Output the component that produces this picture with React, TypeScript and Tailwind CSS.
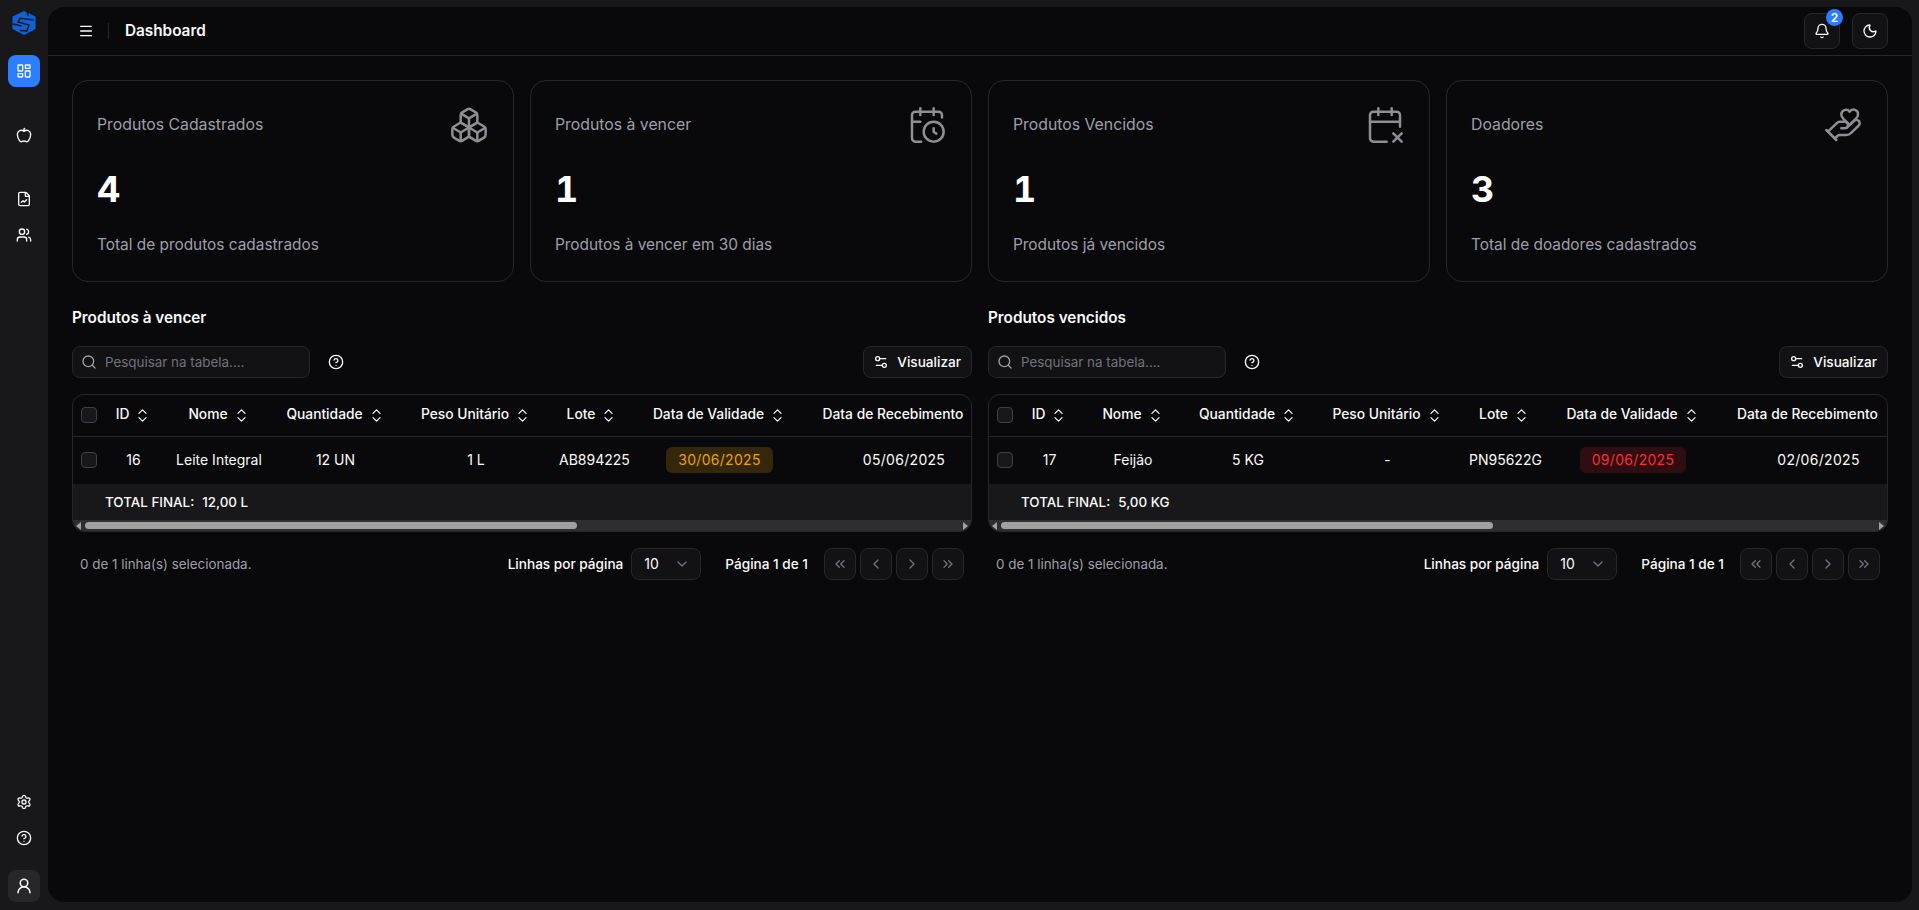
import {
  Apple,
  Bell,
  Boxes,
  CalendarClock,
  CalendarX2,
  ChevronDown,
  ChevronLeft,
  ChevronRight,
  ChevronsLeft,
  ChevronsRight,
  ChevronsUpDown,
  CircleHelp,
  FileChartLine,
  LayoutDashboard,
  Menu,
  Moon,
  Search,
  Settings,
  Settings2,
  UserRound,
  Users,
} from 'lucide-react';

const HandHeartIcon = ({ size, strokeWidth, className }: { size: number; strokeWidth: number; className?: string }) => (
  <svg
    width={size}
    height={size}
    viewBox="0 0 24 24"
    fill="none"
    stroke="currentColor"
    strokeWidth={strokeWidth}
    strokeLinecap="round"
    strokeLinejoin="round"
    className={className}
  >
    <path d="M11 14h2a2 2 0 1 0 0-4h-3c-.6 0-1.1.2-1.4.6L3 16" />
    <path d="m7 20 1.6-1.4c.3-.4.8-.6 1.4-.6h4c1.1 0 2.1-.4 2.8-1.2l4.6-4.4a2 2 0 0 0-2.75-2.91l-4.2 3.9" />
    <path d="m2 15 6 6" />
    <path d="M19.5 8.5c.7-.7 1.5-1.6 1.5-2.7A2.73 2.73 0 0 0 16 4a2.78 2.78 0 0 0-5 1.8c0 1.2.8 2 1.5 2.8L16 12Z" />
  </svg>
);

const cards = [
  { title: 'Produtos Cadastrados', value: '4', desc: 'Total de produtos cadastrados', Icon: Boxes },
  { title: 'Produtos à vencer', value: '1', desc: 'Produtos à vencer em 30 dias', Icon: CalendarClock },
  { title: 'Produtos Vencidos', value: '1', desc: 'Produtos já vencidos', Icon: CalendarX2 },
  { title: 'Doadores', value: '3', desc: 'Total de doadores cadastrados', Icon: HandHeartIcon },
];

const headers = ['ID', 'Nome', 'Quantidade', 'Peso Unitário', 'Lote', 'Data de Validade', 'Data de Recebimento'];

type TableProps = {
  title: string;
  widths: number[];
  row: string[];
  total: string;
  pillClass: string;
};

const Checkbox = () => <div className="h-4 w-4 rounded-[4px] border border-[#3f3f46] bg-[#18181b]" />;

const PagerButton = ({ children }: { children: React.ReactNode }) => (
  <div className="flex h-8 w-8 items-center justify-center rounded-lg border border-[#27272a] bg-[#121214] text-[#71717b]">
    {children}
  </div>
);

const ProductTable = ({ title, widths, row, total, pillClass }: TableProps) => (
  <section className="min-w-0">
    <h2 className="mt-[2px] text-[15.3px] leading-6 font-semibold text-[#fafafa]">{title}</h2>

    <div className="mt-4 flex items-center justify-between">
      <div className="flex items-center gap-[18px]">
        <div className="flex h-8 w-[238px] items-center gap-2 rounded-lg border border-[#27272a] bg-[#121214] px-2">
          <Search size={16} className="text-[#9f9fa9]" />
          <span className="text-[13.4px] text-[#71717b]">Pesquisar na tabela....</span>
        </div>
        <CircleHelp size={16} className="text-[#fafafa]" />
      </div>
      <div className="flex h-8 items-center gap-2 rounded-lg border border-[#27272a] bg-[#121214] pr-[10px] pl-[9px] text-[13.6px] font-medium text-[#fafafa]">
        <Settings2 size={16} />
        Visualizar
      </div>
    </div>

    <div className="mt-4 overflow-hidden rounded-xl border border-[#27272a]">
      <div className="overflow-hidden">
        <table className="w-[1600px] table-fixed border-collapse text-sm text-[#fafafa]">
          <colgroup>
            {widths.map((w, i) => (
              <col key={i} style={{ width: w }} />
            ))}
            <col />
          </colgroup>
          <thead>
            <tr className="h-[41px] border-b border-[#27272a]">
              <th className="pl-2 text-left">
                <Checkbox />
              </th>
              {headers.map((h) => (
                <th key={h} className="text-[13.8px] font-medium">
                  <div className="flex items-center justify-center gap-[5px] whitespace-nowrap">
                    {h}
                    <ChevronsUpDown size={17} strokeWidth={1.75} />
                  </div>
                </th>
              ))}
              <th />
            </tr>
          </thead>
          <tbody>
            <tr className="h-[48px]">
              <td className="pl-2">
                <Checkbox />
              </td>
              {row.map((cell, i) => (
                <td key={i} className={i >= 5 ? 'text-center tracking-[0.3px]' : 'text-center'}>
                  {i === 5 ? (
                    <span className={`inline-block rounded-md px-3 py-[3px] ${pillClass}`}>{cell}</span>
                  ) : (
                    cell
                  )}
                </td>
              ))}
              <td />
            </tr>
          </tbody>
        </table>
      </div>
      <div className="flex h-9 items-center gap-2 bg-[#18181b] pl-8 text-[13.4px] font-medium text-[#fafafa]">
        <span>TOTAL FINAL:</span>
        <span>{total}</span>
      </div>
      <div className="flex h-[11px] items-center justify-between bg-[#2e2e2e] px-[3px]">
        <div className="flex items-center gap-[4px]">
          <div className="h-0 w-0 border-y-[4px] border-r-[5px] border-y-transparent border-r-[#a0a0a0]" />
          <div className="h-[7px] w-[492px] rounded-full bg-[#a0a0a0]" />
        </div>
        <div className="h-0 w-0 border-y-[4px] border-l-[5px] border-y-transparent border-l-[#a0a0a0]" />
      </div>
    </div>

    <div className="mt-4 flex items-center justify-between px-2">
      <span className="text-[13.4px] text-[#9f9fa9]">0 de 1 linha(s) selecionada.</span>
      <div className="flex items-center text-[13.6px] font-medium text-[#fafafa]">
        <span>Linhas por página</span>
        <div className="mr-6 ml-2 flex h-8 w-[70px] items-center justify-between rounded-lg border border-[#27272a] bg-[#121214] pr-[10px] pl-3 text-sm font-normal">
          10
          <ChevronDown size={16} className="text-[#71717b]" />
        </div>
        <span className="mr-4">Página 1 de 1</span>
        <div className="flex gap-1">
          <PagerButton>
            <ChevronsLeft size={16} />
          </PagerButton>
          <PagerButton>
            <ChevronLeft size={16} />
          </PagerButton>
          <PagerButton>
            <ChevronRight size={16} />
          </PagerButton>
          <PagerButton>
            <ChevronsRight size={16} />
          </PagerButton>
        </div>
      </div>
    </div>
  </section>
);

const SideButton = ({ children, className = '' }: { children: React.ReactNode; className?: string }) => (
  <div className={`flex h-8 w-8 items-center justify-center rounded-lg text-[#fafafa] ${className}`}>{children}</div>
);

export default function App() {
  return (
    <div className="flex h-screen overflow-hidden bg-[#18181b] font-['Inter',sans-serif]">
      <aside className="flex w-12 shrink-0 flex-col items-center pb-2">
        <svg viewBox="0 0 24 24" className="mt-[11px] h-6 w-6 shrink-0">
          <path d="M12 0 23.5 5.5V18L12 24 .5 18V5.5Z" fill="#0f62d6" />
          <path d="M15 0.5 16 5M21.5 9 8 7.3 6 11 17 14 15 20 8 19.5M1 13 9.5 15" fill="none" stroke="#18181b" strokeWidth="1.4" />
        </svg>
        <SideButton className="mt-[20px] bg-[#2b7fff]">
          <LayoutDashboard size={16} />
        </SideButton>
        <SideButton className="mt-8">
          <Apple size={16} />
        </SideButton>
        <SideButton className="mt-8">
          <FileChartLine size={16} />
        </SideButton>
        <SideButton className="mt-1">
          <Users size={16} />
        </SideButton>
        <SideButton className="mt-auto">
          <Settings size={16} />
        </SideButton>
        <SideButton className="mt-1">
          <CircleHelp size={16} />
        </SideButton>
        <SideButton className="mt-4 bg-[#27272a]">
          <UserRound size={18} />
        </SideButton>
      </aside>

      <main className="mt-[7px] mr-[7px] mb-2 flex min-w-0 flex-1 flex-col rounded-2xl bg-[#09090b]">
        <header className="flex h-[49px] shrink-0 items-center justify-between border-b border-[#27272a] pr-6 pl-[30px]">
          <div className="flex items-center text-[#fafafa]">
            <Menu size={16} />
            <div className="mr-4 ml-[14px] h-4 w-px bg-[#27272a]" />
            <span className="text-[15.3px] font-semibold">Dashboard</span>
          </div>
          <div className="flex items-center gap-3 text-[#fafafa]">
            <div className="relative flex h-9 w-9 items-center justify-center rounded-lg border border-[#27272a] bg-[#121214]">
              <Bell size={16} />
              <span className="absolute -top-[5px] right-[-4px] flex h-[17px] w-[17px] items-center justify-center rounded-full bg-[#2b7fff] text-xs font-semibold text-white">
                2
              </span>
            </div>
            <div className="flex h-9 w-9 items-center justify-center rounded-lg border border-[#27272a] bg-[#121214]">
              <Moon size={16} />
            </div>
          </div>
        </header>

        <div className="flex-1 p-6">
          <div className="grid grid-cols-4 gap-4">
            {cards.map(({ title, value, desc, Icon }) => (
              <div key={title} className="rounded-2xl border border-[#27272a] bg-[#09090b] p-6">
                <div className="flex h-10 items-center justify-between">
                  <span className="text-[15.8px] text-[#9f9fa9]">{title}</span>
                  <Icon size={40} strokeWidth={1.5} className="text-[#8e8e93]" />
                </div>
                <div className="mt-6 h-10 text-4xl leading-10 font-bold text-white tabular-nums">{value}</div>
                <div className="mt-6 text-[15.4px] leading-6 text-[#9f9fa9]">{desc}</div>
              </div>
            ))}
          </div>

          <div className="mt-[22px] grid grid-cols-2 gap-4">
            <ProductTable
              title="Produtos à vencer"
              widths={[34, 53, 118, 115, 166, 66, 189, 180]}
              row={['16', 'Leite Integral', '12 UN', '1 L', 'AB894225', '30/06/2025', '05/06/2025']}
              total="12,00 L"
              pillClass="bg-[#35270a] text-[#f0a000]"
            />
            <ProductTable
              title="Produtos vencidos"
              widths={[34, 53, 114, 116, 163, 71, 186, 185]}
              row={['17', 'Feijão', '5 KG', '-', 'PN95622G', '09/06/2025', '02/06/2025']}
              total="5,00 KG"
              pillClass="bg-[#2f0d10] text-[#fb2c36]"
            />
          </div>
        </div>
      </main>
    </div>
  );
}
